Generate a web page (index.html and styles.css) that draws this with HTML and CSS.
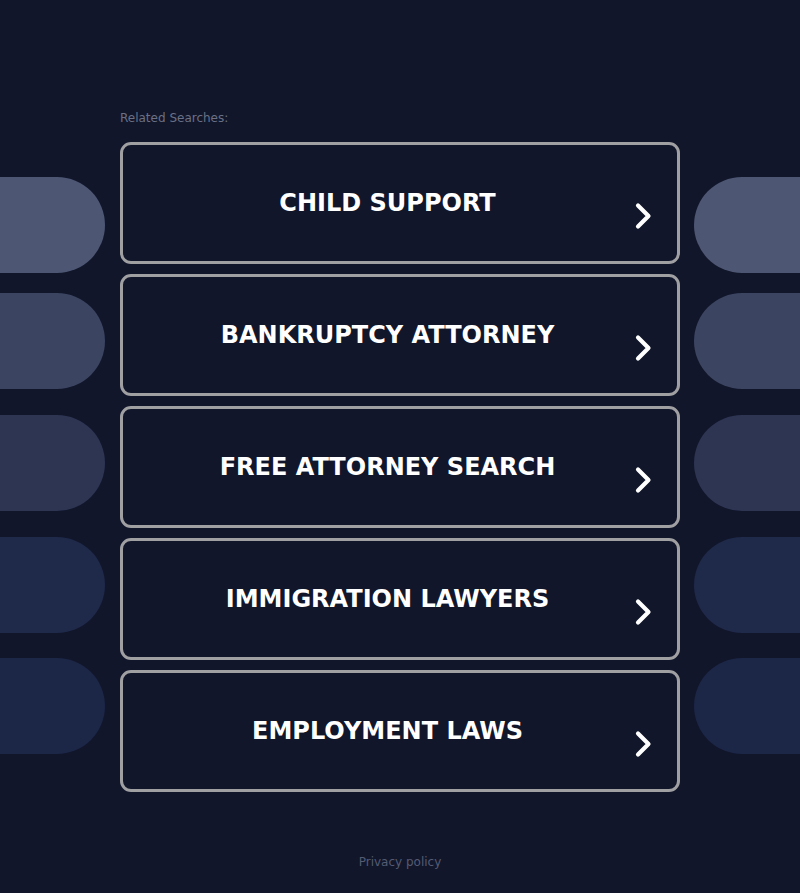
FILE: index.html
```html
<!DOCTYPE html>
<html lang="en">
<head>
<meta charset="utf-8">
<title>Related Searches</title>
<link rel="stylesheet" href="styles.css">
</head>
<body>
<div class="page">
  <div class="side side-left">
    <div class="pill pill-1"></div>
    <div class="pill pill-2"></div>
    <div class="pill pill-3"></div>
    <div class="pill pill-4"></div>
    <div class="pill pill-5"></div>
  </div>
  <main class="center">
    <div class="label">Related Searches:</div>
    <div class="list">
      <a class="item" href="#"><span class="item-text">CHILD SUPPORT</span><svg class="chev" viewBox="0 0 20 28" width="20" height="28"><path d="M5 3.5 L15.5 14 L5 24.5" fill="none" stroke="#fff" stroke-width="4.2" stroke-linecap="round" stroke-linejoin="round"/></svg></a>
      <a class="item" href="#"><span class="item-text">BANKRUPTCY ATTORNEY</span><svg class="chev" viewBox="0 0 20 28" width="20" height="28"><path d="M5 3.5 L15.5 14 L5 24.5" fill="none" stroke="#fff" stroke-width="4.2" stroke-linecap="round" stroke-linejoin="round"/></svg></a>
      <a class="item" href="#"><span class="item-text">FREE ATTORNEY SEARCH</span><svg class="chev" viewBox="0 0 20 28" width="20" height="28"><path d="M5 3.5 L15.5 14 L5 24.5" fill="none" stroke="#fff" stroke-width="4.2" stroke-linecap="round" stroke-linejoin="round"/></svg></a>
      <a class="item" href="#"><span class="item-text">IMMIGRATION LAWYERS</span><svg class="chev" viewBox="0 0 20 28" width="20" height="28"><path d="M5 3.5 L15.5 14 L5 24.5" fill="none" stroke="#fff" stroke-width="4.2" stroke-linecap="round" stroke-linejoin="round"/></svg></a>
      <a class="item" href="#"><span class="item-text">EMPLOYMENT LAWS</span><svg class="chev" viewBox="0 0 20 28" width="20" height="28"><path d="M5 3.5 L15.5 14 L5 24.5" fill="none" stroke="#fff" stroke-width="4.2" stroke-linecap="round" stroke-linejoin="round"/></svg></a>
    </div>
    <footer class="footer"><a href="#" class="privacy">Privacy policy</a></footer>
  </main>
  <div class="side side-right">
    <div class="pill pill-1"></div>
    <div class="pill pill-2"></div>
    <div class="pill pill-3"></div>
    <div class="pill pill-4"></div>
    <div class="pill pill-5"></div>
  </div>
</div>
</body>
</html>
```
FILE: styles.css
```css
html, body {
  margin: 0;
  padding: 0;
  background: #11162b;
  height: 100%;
  overflow: hidden;
}
body {
  font-family: "DejaVu Sans", "Liberation Sans", sans-serif;
}
.page {
  display: flex;
  height: 893px;
  width: 800px;
  overflow: hidden;
  box-sizing: border-box;
}
.side {
  display: flex;
  flex-direction: column;
}
.side-left {
  width: 105px;
  margin-right: 15px;
}
.side-right {
  flex: 1;
  margin-left: 14px;
}
.pill {
  height: 96px;
}
.side-left .pill { border-radius: 0 48px 48px 0; }
.side-right .pill { border-radius: 48px 0 0 48px; }
.pill-1 { margin-top: 177px; background: #4d5673; }
.pill-2 { margin-top: 20px; background: #3b4460; }
.pill-3 { margin-top: 26px; background: #2d3553; }
.pill-4 { margin-top: 26px; background: #1f2949; }
.pill-5 { margin-top: 25px; background: #1c2647; }
.center {
  width: 560px;
  padding-top: 111px;
  display: flex;
  flex-direction: column;
}
.label {
  font-size: 12px;
  line-height: 14px;
  color: #6a7085;
  margin-bottom: 17px;
}
.list {
  display: flex;
  flex-direction: column;
  gap: 10px;
}
.item {
  position: relative;
  height: 122px;
  box-sizing: border-box;
  border: 3px solid #a0a0a3;
  border-radius: 11px;
  display: flex;
  align-items: center;
  justify-content: center;
  padding-right: 25px;
  text-decoration: none;
  color: #fff;
}
.item-text {
  font-size: 24px;
  font-weight: bold;
  line-height: 30px;
  margin-top: 0;
}
.chev {
  position: absolute;
  right: 24px;
  top: 57px;
}
.footer {
  margin-top: 59px;
  text-align: center;
}
.privacy {
  font-size: 12px;
  color: #545b72;
  text-decoration: none;
}
```
